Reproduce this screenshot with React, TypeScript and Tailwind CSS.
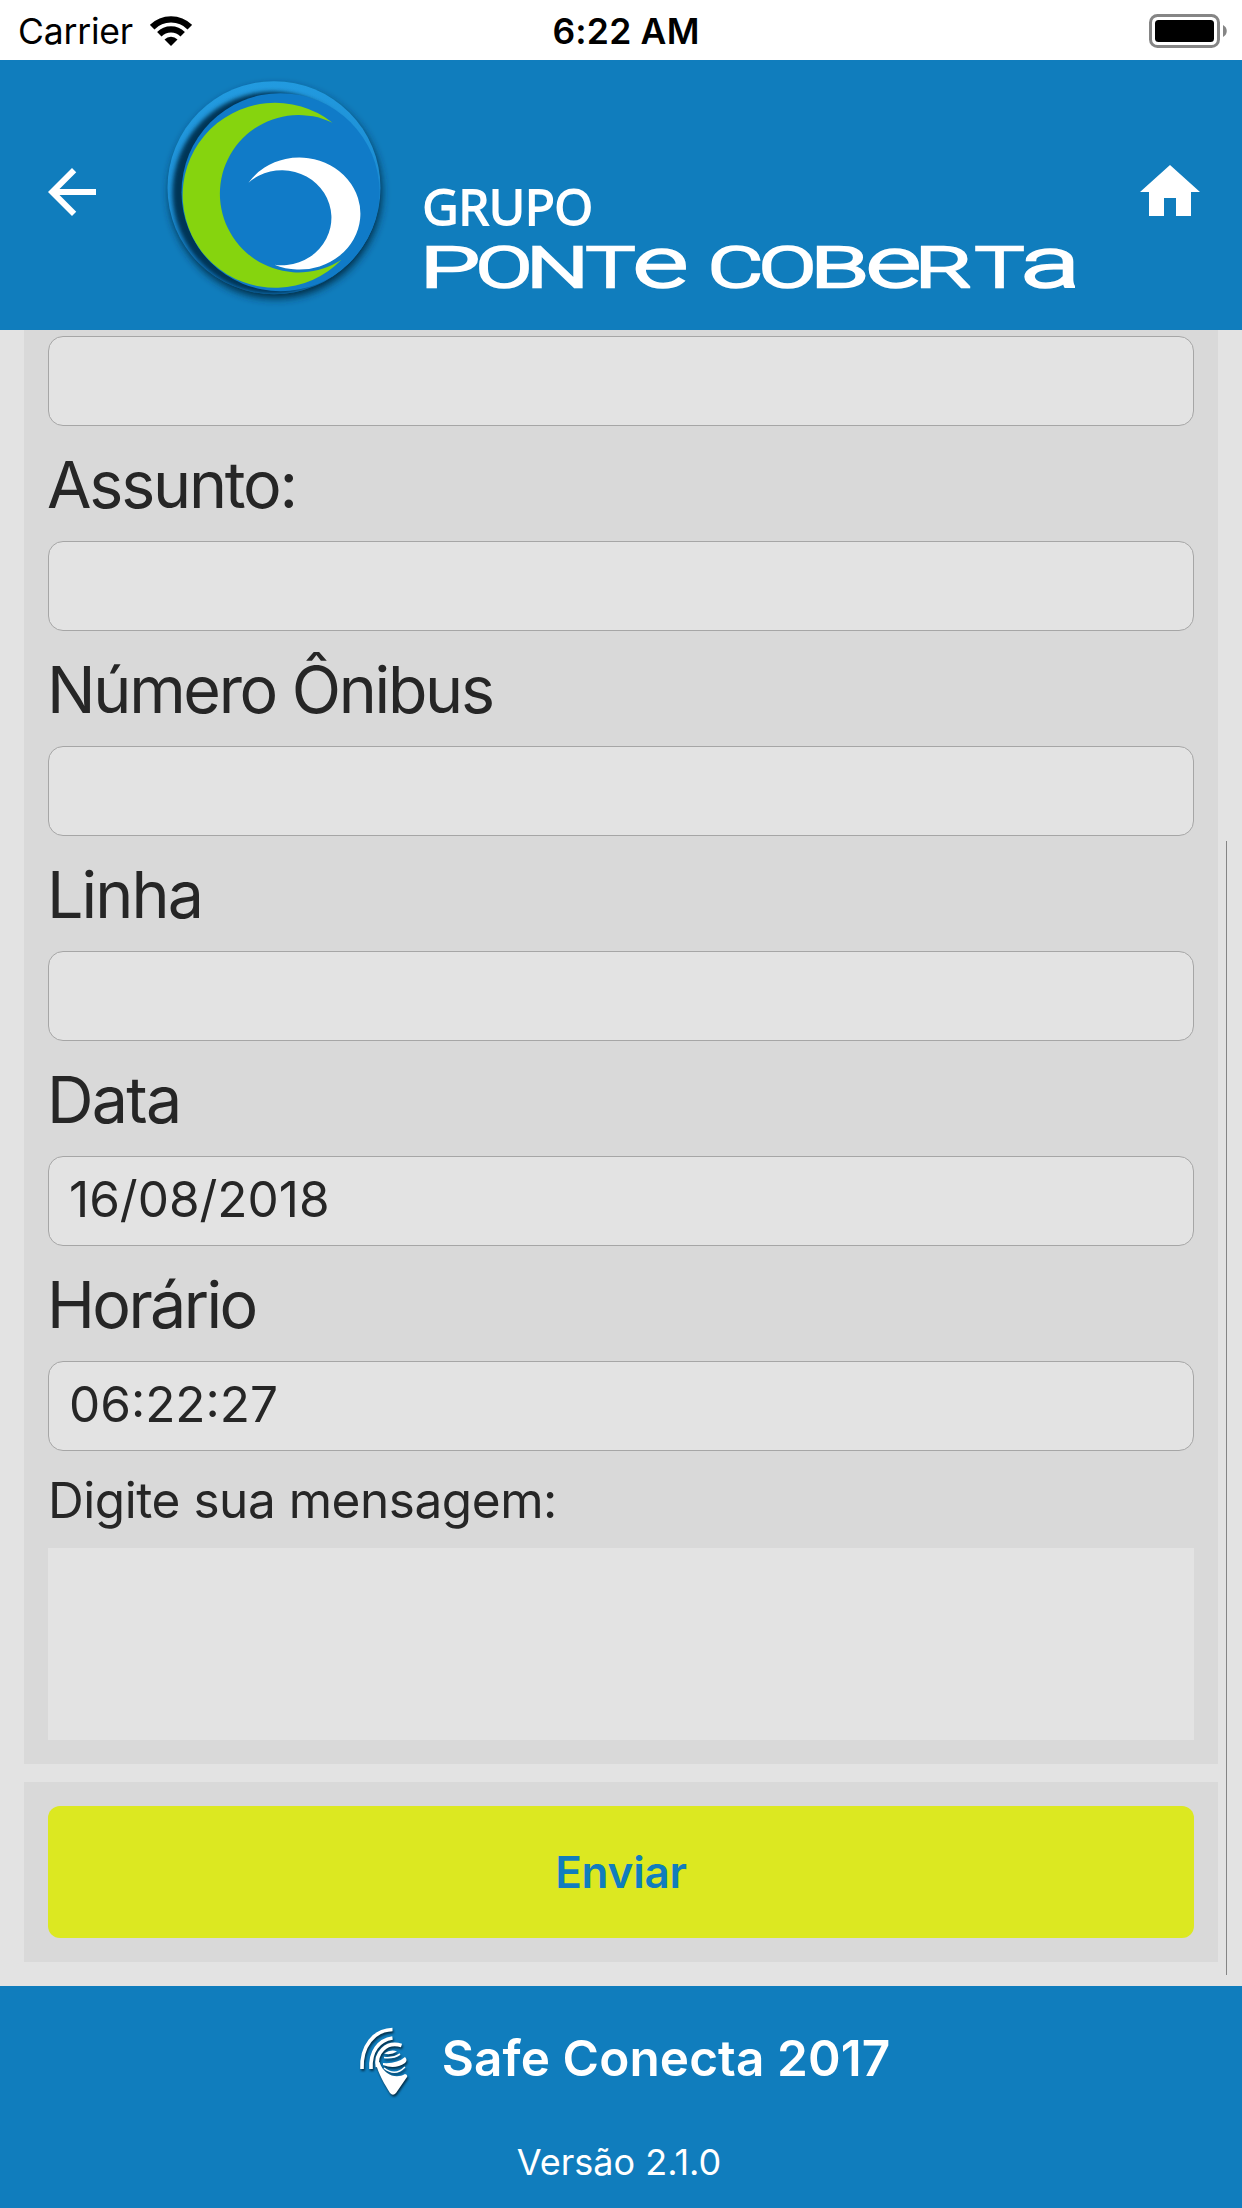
import { MdArrowBack, MdHome } from "react-icons/md";

const fields = [
  { label: "Assunto:", value: "", tracking: "tracking-[-2.2px]" },
  { label: "Número Ônibus", value: "", tracking: "tracking-[-2.3px]" },
  { label: "Linha", value: "", tracking: "tracking-[-1.900px]" },
  { label: "Data", value: "16/08/2018", tracking: "tracking-[-1.700px]" },
  { label: "Horário", value: "06:22:27", tracking: "tracking-[-2.600px]" },
];

// x and length of each stretched letter in the wordmark
const wordmark = [
  { char: "P", x: 420, length: 60, size: 56 },
  { char: "O", x: 476, length: 56, size: 56 },
  { char: "N", x: 526.5, length: 62, size: 56 },
  { char: "T", x: 586, length: 49, size: 56 },
  { char: "e", x: 633, length: 55, size: 71 },
  { char: " ", x: 690, length: 16, size: 56 },
  { char: "C", x: 708, length: 55, size: 56 },
  { char: "O", x: 759, length: 57, size: 56 },
  { char: "B", x: 810.5, length: 58, size: 56 },
  { char: "e", x: 866, length: 55, size: 71 },
  { char: "R", x: 915, length: 57, size: 56 },
  { char: "T", x: 975, length: 49, size: 56 },
  { char: "a", x: 1021, length: 59, size: 71 },
];

function StatusBar() {
  return (
    <div className="grid h-[60px] shrink-0 grid-cols-3 items-center bg-white pr-[14px] pl-[18px] text-black">
      <div className="flex items-center gap-[17px]">
        <span className="pt-0.5 text-[35.5px] leading-[60px] tracking-[-0.2px]">Carrier</span>
        <svg className="h-[30px] w-[42px]" viewBox="0 0 42 30" fill="none" stroke="currentColor">
          <path d="M2.2 11.2a26.6 26.6 0 0 1 37.6 0" strokeWidth="6.4" />
          <path d="M9.3 18.3a16.5 16.5 0 0 1 23.4 0" strokeWidth="6.2" />
          <path d="M21 30l-6.5-6.5a9.2 9.2 0 0 1 13 0z" fill="currentColor" stroke="none" />
        </svg>
      </div>
      <span className="pt-0.5 pl-1.5 text-center text-[35.5px] leading-[60px] font-semibold tracking-[0.2px]">
        6:22 AM
      </span>
      <svg className="h-[34px] w-[79px] justify-self-end" viewBox="0 0 79 34">
        <rect x="1.5" y="1.5" width="68" height="31" rx="7" fill="none" stroke="#858585" strokeWidth="3" />
        <rect x="6" y="6" width="59" height="22" rx="3.5" />
        <path d="M74 11c5 2.5 5 9.500 0 12z" fill="#858585" />
      </svg>
    </div>
  );
}

function Logo() {
  return (
    <svg className="h-[270px] w-[930px]" viewBox="160 60 930 270">
      <defs>
        <filter id="soft" x="-20%" y="-20%" width="140%" height="140%">
          <feGaussianBlur stdDeviation="4.500" />
        </filter>
        <filter id="softer" x="-20%" y="-20%" width="140%" height="140%">
          <feGaussianBlur stdDeviation="2" />
        </filter>
        <clipPath id="disc">
          <circle cx="274.5" cy="187" r="106.500" />
        </clipPath>
        <linearGradient id="ring" x1="0.4" y1="0" x2="0.6" y2="1">
          <stop offset="0" stopColor="#229be0" />
          <stop offset="0.5" stopColor="#1d8fd5" />
          <stop offset="0.8" stopColor="#1079c4" />
        </linearGradient>
      </defs>
      <g transform="translate(-0.500 0.700)">
        <circle cx="276" cy="191.500" r="106" fill="#042a43" filter="url(#soft)" />
        <circle cx="274.5" cy="187" r="106.500" fill="url(#ring)" />
        <g clipPath="url(#disc)">
          <ellipse cx="273" cy="192" rx="100" ry="101" fill="#053656" filter="url(#softer)" />
          <circle cx="281" cy="191.500" r="99" fill="#107bc8" />
        </g>
        <path d="M333 122A92.500 92.500 0 1 0 342 259A78.700 78.700 0 1 1 333 122z" fill="#86d40e" />
        <path d="M249 182A61 56 0 1 1 275 264A49.500 47.500 0 1 0 249 182z" fill="#fff" />
      </g>
      <text
        x="422.5"
        y="224.5"
        textLength="170.5"
        lengthAdjust="spacingAndGlyphs"
        fill="#fff"
        stroke="#fff"
        strokeWidth="1.800"
        className="font-['Open_Sans'] text-[49px] font-medium"
      >
        GRUPO
      </text>
      <text
        y="287"
        fill="#fff"
        stroke="#fff"
        strokeWidth="2.600"
        xmlSpace="preserve"
        className="font-[Roboto] font-light"
      >
        {wordmark.map((item) => (
          <tspan
            key={item.x}
            x={item.x}
            textLength={item.length}
            lengthAdjust="spacingAndGlyphs"
            fontSize={item.size}
          >
            {item.char}
          </tspan>
        ))}
      </text>
    </svg>
  );
}

function Header() {
  return (
    <header className="flex h-[270px] shrink-0 bg-[#107dbd] text-white">
      <button className="mt-24 ml-9 h-[72px] w-[72px]">
        <MdArrowBack className="h-[72px] w-[72px]" />
      </button>
      <div className="ml-[52px]">
        <Logo />
      </div>
      <button className="mt-24 ml-11 h-[72px] w-[72px]">
        <MdHome className="h-[72px] w-[72px]" />
      </button>
    </header>
  );
}

function Input({ value }: { value: string }) {
  return (
    <div className="h-[90px] rounded-[15px] border border-[#a6a6a6] bg-[#e3e3e3] pl-5 text-[49.500px] leading-[84px]">
      {value}
    </div>
  );
}

function Footer() {
  return (
    <footer className="flex h-[222px] shrink-0 flex-col items-center bg-[#107dbd] text-white">
      <div className="mt-[36px] flex h-[72px] items-center gap-[30px] pl-[4px]">
        <svg
          className="mt-[7px] h-[76px] w-[56px] overflow-visible drop-shadow-[1px_2px_1px_#032f49]"
          viewBox="356 2024 56 76"
          fill="none"
          stroke="#fff"
        >
          <path d="M362 2069C361 2046 374 2030 392.500 2029.500" strokeWidth="3.600" />
          <path d="M371 2069C370 2051 379 2040 392.500 2038" strokeWidth="3.600" />
          <path d="M401.500 2045.500C386 2041 375 2053 377.500 2067" strokeWidth="3.800" />
          <path d="M375.700 2063C378 2073 385 2085 390 2093Q393 2096.500 396 2093L407 2077Q408 2074.500 405 2074C397 2079 384 2076 379.500 2062z" fill="#fff" stroke="none" />
          <path d="M384 2053.500Q391 2049 397 2051.500Q391 2055.500 384 2053.500z" fill="#fff" stroke="none" />
          <path d="M383 2063Q397 2064 405 2057Q408 2060 405 2063Q395 2070 383 2065z" fill="#fff" stroke="none" />
          <path d="M384 2057.500Q394 2058.500 400 2054" strokeWidth="1.600" />
          <path d="M384 2068Q395 2077 405 2067" strokeWidth="1.400" />
        </svg>
        <span className="text-[49.500px] leading-[72px] font-semibold tracking-[0.1px]">Safe Conecta 2017</span>
      </div>
      <span className="mt-[46px] pr-1 text-[36px] leading-[44px]">Versão 2.1.0</span>
    </footer>
  );
}

export default function App() {
  return (
    <div className="flex h-[2208px] w-[1242px] flex-col overflow-hidden bg-[#e3e3e3] font-['Inter',sans-serif] text-[#262626]">
      <StatusBar />
      <Header />
      <main className="relative h-[1656px] shrink-0 px-6">
        <section className="h-[1434px] bg-[#d9d9d9] px-6 pt-1.5">
          <Input value="" />
          {fields.map((field) => (
            <div key={field.label}>
              <div className={`-ml-px h-[115px] pt-[19px] text-[64.500px] leading-[80px] ${field.tracking}`}>
                {field.label}
              </div>
              <Input value={field.value} />
            </div>
          ))}
          <div className="h-[97px] pt-[19px] text-[49.500px] leading-[60px] tracking-[-0.45px]">
            Digite sua mensagem:
          </div>
          <div className="h-48 bg-[#e3e3e3]" />
        </section>
        <section className="mt-[18px] h-[180px] bg-[#d9d9d9] p-6">
          <button className="h-[132px] w-full rounded-xl bg-[#dce821] text-[44px] font-semibold tracking-[-0.2px] text-[#107dbd]">
            Enviar
          </button>
        </section>
        <div className="absolute top-[511px] right-[15px] h-[1134px] w-px bg-[#858585]" />
      </main>
      <Footer />
    </div>
  );
}
